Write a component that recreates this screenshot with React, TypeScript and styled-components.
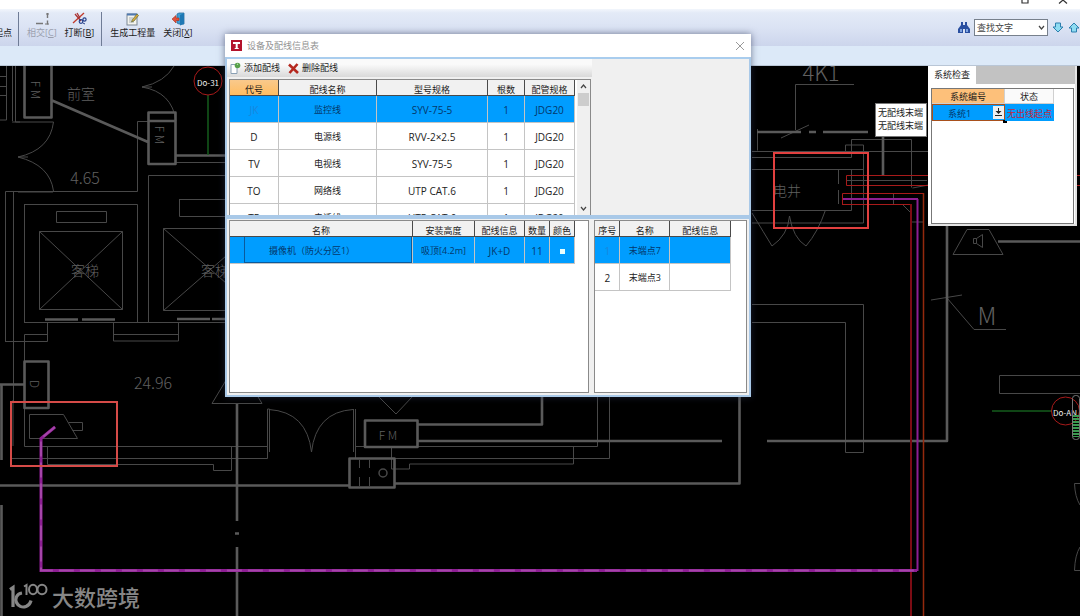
import React from "react";
import styled, { createGlobalStyle } from "styled-components";

const GlobalStyle = createGlobalStyle`
  * { box-sizing: border-box; }
  html, body, #root { height: 100%; }
  body {
    margin: 0;
    background: #000;
    color: #1c1c1c;
    font-family: "Open Sans", "Noto Sans CJK SC", sans-serif;
    font-size: 9px;
    line-height: 12px;
  }
  button, input, select { font: inherit; color: inherit; margin: 0; padding: 0; }
`;

/* ---------- frame ---------- */

const Window = styled.div`
  position: relative;
  display: flex;
  flex-direction: column;
  min-height: 100%;
  overflow: hidden;
`;

const TitleStrip = styled.header`
  display: flex;
  justify-content: flex-end;
  align-items: flex-start;
  gap: 28px;
  height: 9px;
  padding-right: 12px;
  background: #fff;
`;

const Toolbar = styled.nav`
  display: flex;
  align-items: flex-start;
  height: 37px;
  background: linear-gradient(#f2f6fc 0, #e3eaf7 4px, #dbe3f4 50%, #ccd5ec);
`;

const SubBar = styled.div`
  height: 20px;
  background: #dce9f8;
  border-bottom: 1px solid #b9c6d6;
`;

const Tools = styled.div`
  display: flex;
  flex: 1;
`;

const ToolGroup = styled.div<{ $clipped?: boolean }>`
  display: flex;
  justify-content: flex-end;
  gap: 8px;
  height: 34px;
  margin-top: 3px;
  padding: 0 ${(p) => (p.$clipped ? 6 : 7)}px 0 ${(p) => (p.$clipped ? 0 : 8)}px;
  width: ${(p) => (p.$clipped ? "19px" : "auto")};
  overflow: hidden;
  border-right: 1px solid #6f7c96;
  &:last-child { border-right: 0; }
`;

const ToolButton = styled.button`
  display: flex;
  flex-direction: column;
  align-items: center;
  flex: none;
  gap: 1px;
  border: 0;
  background: none;
  white-space: nowrap;
  &:disabled { color: #9a9fae; }
  svg { display: block; height: 14px; }
`;

const Search = styled.form`
  display: flex;
  align-items: center;
  gap: 4px;
  height: 36px;
`;

const Combo = styled.div`
  display: flex;
  align-items: center;
  width: 74px;
  height: 17px;
  padding-right: 2px;
  border: 1px solid #77808c;
  background: #fff;
  input { flex: 1; min-width: 0; height: 15px; border: 0; padding-left: 2px; background: none; outline: 0; color: #444; }
`;

const IconButton = styled.button`
  display: flex;
  align-items: center;
  justify-content: center;
  flex: none;
  border: 0;
  background: none;
`;

const Canvas = styled.main`
  flex: 1;
  display: flex;
  background: #000;
  min-height: 550px;
  svg { flex: 1; width: 100%; }
`;

const CadText = styled.text<{ $light?: boolean }>`
  font-family: "Liberation Sans Narrow", "Noto Sans CJK SC", sans-serif;
  font-weight: ${(p) => (p.$light ? 400 : 300)};
  fill: ${(p) => (p.$light ? "#f0f0f0" : "#606060")};
  text-anchor: middle;
  dominant-baseline: central;
`;

/* ---------- grids ---------- */

const Grid = styled.table`
  border-collapse: separate;
  border-spacing: 0;
  table-layout: fixed;
  flex: none;
  width: 0;
`;

const HeadCell = styled.th<{ $hot?: boolean }>`
  height: 16px;
  padding: 4px 0 0;
  font-weight: 400;
  line-height: 11px;
  text-align: center;
  white-space: nowrap;
  background: ${(p) => (p.$hot ? "linear-gradient(#f9c98c, #ffbd62)" : "#f1f1f1")};
  border-right: 1px solid #4a4a4a;
  border-bottom: 1px solid #4a4a4a;
`;

const Cell = styled.td<{ $faint?: boolean; $latin?: boolean }>`
  height: 27px;
  padding: 2px 0 0;
  font-size: ${(p) => (p.$latin ? 10 : 9)}px;
  text-align: center;
  white-space: nowrap;
  border-right: 1px solid #c4c4c4;
  border-bottom: 1px solid #c4c4c4;
  color: ${(p) => (p.$faint ? "#1a86dd" : "inherit")};
`;

const Row = styled.tr<{ $on?: boolean }>`
  background: ${(p) => (p.$on ? "#009dff" : "#fff")};
  color: ${(p) => (p.$on ? "#04386c" : "#222")};
`;

const TreeCell = styled(Cell)`
  padding: 0 0 0 14px;
`;

const TreeLabel = styled.div`
  height: 26px;
  padding: 8px 32px 0 0;
  border: 1px solid #0a5a9c;
  border-top: 0;
`;

const Swatch = styled.span`
  display: inline-block;
  width: 5px;
  height: 5px;
  background: #e8ffff;
`;

/* ---------- dialog ---------- */

const Dialog = styled.section`
  position: absolute;
  left: 225px;
  top: 34px;
  width: 526px;
  background: #f0f0f0;
  border: 2px solid #a9c9e8;
  border-top: 0;
  box-shadow: 0 0 7px rgba(40, 50, 80, 0.6);
`;

const DialogTitle = styled.header`
  display: flex;
  align-items: center;
  gap: 5px;
  height: 23px;
  margin: 0 -2px;
  padding: 0 6px;
  background: #fff;
  color: #929292;
  h1 { flex: 1; margin: 0; font: inherit; }
`;

const DialogTools = styled.div`
  display: flex;
  align-items: center;
  gap: 8px;
  width: 365px;
  height: 20px;
  padding: 0 3px;
  border-top: 2px solid #a9cdee;
  background: linear-gradient(#fafafa 30%, #d9d9d9);
`;

const ToolLine = styled.div`
  background: linear-gradient(#a9cdee, #a9cdee) 0 0 / 100% 2px no-repeat;
`;

const SmallTool = styled.button`
  display: flex;
  align-items: center;
  gap: 3px;
  border: 0;
  background: none;
`;

const Pane = styled.div`
  display: flex;
  align-items: flex-start;
  background: #fff;
  border: 1px solid #8a8a8a;
  overflow: hidden;
`;

const UpperArea = styled.div`
  padding: 2px 158px 0 2px;
  border-bottom: 4px solid #a9c9e8;
`;

const UpperPane = styled(Pane)`
  height: 136px;
  border-bottom: 0;
  justify-content: space-between;
`;

const LowerArea = styled.div`
  display: grid;
  grid-template-columns: 361fr 153fr;
  gap: 5px;
  padding: 1px 2px 2px;
`;

const LowerPane = styled(Pane)`
  height: 173px;
`;

const ScrollBar = styled.div`
  display: flex;
  flex-direction: column;
  align-items: center;
  align-self: stretch;
  width: 13px;
  background: #f0f0f0;
`;

const ScrollButton = styled(IconButton)`
  width: 12px;
  height: 13px;
`;

const Thumb = styled.div`
  width: 11px;
  height: 13px;
  margin-bottom: auto;
  background: #cdcdcd;
`;

/* ---------- system check panel ---------- */

const CheckPanel = styled.aside`
  position: absolute;
  right: 3px;
  top: 66px;
  width: 149px;
  background: #fff;
  border-right: 2px solid #e4e4e4;
  border-bottom: 2px solid #e4e4e4;
`;

const TabBar = styled.div`
  display: flex;
  height: 18px;
  background: #c2c2c2;
`;

const Tab = styled.button`
  width: 48px;
  border: 0;
  background: #fff;
`;

const CheckBody = styled.div`
  height: 136px;
  margin: 4px 1px 0 3px;
  border: 1px solid #777;
`;

const CheckHead = styled(HeadCell)<{ $hot?: boolean }>`
  height: 15px;
  padding: 0;
  border-color: #d0d0d0;
  background: ${(p) => (p.$hot ? "#fdc07a" : "#fafafa")};
`;

const CheckCell = styled.td`
  position: relative;
  height: 17px;
  padding: 0;
  background: #009dff;
`;

const SystemSelect = styled.select`
  display: block;
  width: 100%;
  height: 17px;
  appearance: none;
  border: 1px solid #a8501c;
  border-radius: 0;
  background: none;
  color: #04386c;
  text-align: center;
  text-align-last: center;
  padding: 2px 18px 0 0;
`;

const DropMark = styled.span`
  position: absolute;
  right: 1px;
  top: 2px;
  display: flex;
  width: 11px;
  height: 13px;
  align-items: center;
  justify-content: center;
  background: #eee;
  pointer-events: none;
`;

const Handle = styled.i`
  position: absolute;
  right: -2px;
  bottom: -2px;
  width: 4px;
  height: 3px;
  background: #000;
`;

const StatusCell = styled(CheckCell)`
  padding-top: 3px;
  color: #c0263c;
  text-align: center;
  white-space: nowrap;
`;

const Hint = styled.div`
  position: absolute;
  right: 153px;
  top: 103px;
  width: 52px;
  padding: 2px 2px 4px;
  border: 1px solid #777;
  background: #fff;
  line-height: 13px;
  white-space: nowrap;
`;

const Watermark = styled.footer`
  position: absolute;
  left: 9px;
  bottom: 4px;
  display: flex;
  align-items: center;
  gap: 4px;
  color: #868686;
  font: 500 22px/32px "Noto Sans CJK SC", sans-serif;
`;

/* ---------- icons ---------- */

const IntersectIcon = () => (
  <svg width="14" height="14" viewBox="0 0 14 14" stroke="#777" fill="none">
    <path d="M1 11.5h7M12.5 1v5M12.5 8.500v4" strokeWidth="1.400" />
    <path d="M11 2h3M10 12h4" />
  </svg>
);

const BreakIcon = () => (
  <svg width="15" height="14" viewBox="0 0 15 14" fill="none">
    <path d="M1 11L12 1" stroke="#c0392b" strokeWidth="1.300" />
    <path d="M3 2l6 7M5 1l3 5" stroke="#a33" strokeWidth="1.300" />
    <circle cx="9" cy="9.500" r="1.800" stroke="#27408b" strokeWidth="1.200" />
    <circle cx="12.500" cy="7.500" r="1.600" stroke="#27408b" strokeWidth="1.200" />
    <path d="M11 11l2 1" stroke="#27408b" />
  </svg>
);

const ReportIcon = () => (
  <svg width="13" height="14" viewBox="0 0 13 14">
    <rect x="1" y="2" width="10" height="11" fill="#f4f4ee" stroke="#7d8794" />
    <path d="M1 2.500h10" stroke="#4f79b0" strokeWidth="2" />
    <path d="M3 6h4M3 8h3M3 10h5" stroke="#a8b0b8" />
    <path d="M5.500 10l1-2.500L11 2l1.500 1.500L8 9z" fill="#d9a93c" stroke="#5d6a3a" strokeWidth=".7" />
  </svg>
);

const ExitIcon = () => (
  <svg width="14" height="14" viewBox="0 0 14 14">
    <path d="M6 2l2-1h5v11H8l-2-1z" fill="#3b9fd6" stroke="#2b6c99" strokeWidth=".8" />
    <path d="M9 3l4-2v11l-4 1.500z" fill="#1f78b4" />
    <path d="M1 7l4-3.500V6h3v2.500H5V11z" fill="#e2513b" stroke="#a8321e" strokeWidth=".6" />
  </svg>
);

const Binoculars = () => (
  <svg width="12" height="11" viewBox="0 0 12 11" fill="#2a4fa0">
    <path d="M3 0h2v3h2V0h2v3l3 4v4H7V7H5v4H0V7l3-4z" />
    <path d="M2 7h2v3H2zM8 7h2v3H8z" fill="#7fa4e0" />
  </svg>
);

const Arrow = ({ up }: { up?: boolean }) => (
  <svg width="12" height="11" viewBox="0 0 12 11">
    <path
      d={up ? "M6 1l5 5H8.500v4h-5V6H1z" : "M6 10L1 5h2.500V1h5v4H11z"}
      fill="#8fdcf2"
      stroke="#2c7fae"
      strokeLinejoin="round"
    />
  </svg>
);

const Chevron = ({ up }: { up?: boolean }) => (
  <svg width="7" height="5" viewBox="0 0 7 5" fill="none" stroke="#444" strokeWidth="1.200">
    <path d={up ? "M1 4l2.500-3L6 4" : "M1 1l2.500 3L6 1"} />
  </svg>
);

const AppLogo = () => (
  <svg width="11" height="11" viewBox="0 0 11 11">
    <rect width="11" height="11" fill="#b3122b" />
    <path d="M2 2h7v2H6.700v4h1v1h-4V8h1V4H2z" fill="#fff" />
  </svg>
);

const AddIcon = () => (
  <svg width="11" height="12" viewBox="0 0 11 12">
    <path d="M1 2.500h6v9H1z" fill="#fff" stroke="#8aa0b4" />
    <circle cx="7.500" cy="3.500" r="2.800" fill="#57a04a" />
    <path d="M7 2l1 .5" stroke="#c8e8bd" strokeWidth="1.200" />
  </svg>
);

const DeleteIcon = () => (
  <svg width="11" height="11" viewBox="0 0 11 11" stroke="#b5281e" strokeWidth="2.600">
    <path d="M1 1.500l9 8.500M9.500 1L1.500 10" />
  </svg>
);

const WatermarkLogo = () => (
  <svg width="39" height="28" viewBox="0 0 39 28" fill="none" stroke="currentColor">
    <path d="M1 7.500l3-2V25" strokeWidth="3.200" />
    <path d="M13 11C7 12 6 17 7.500 20.500S13 26 17 24.500s4-3 5-6" strokeWidth="3.200" />
    <path d="M15 4.500l2.500-1.500V13" strokeWidth="2" />
    <ellipse cx="24" cy="7.500" rx="4" ry="4.800" strokeWidth="2" />
    <ellipse cx="33" cy="7.500" rx="4.500" ry="4.800" strokeWidth="2" />
  </svg>
);

/* ---------- floor plan ---------- */

const THIN = [
  "M6.500 66v54H0M0 76.500h6M0 86.500h6M0 95.500h6M12.500 66v55M15.500 66v56H53.500M12 122h8",
  "M53.500 122Q50 150 18 157Q50 165 53.500 191M18 157h10",
  "M5.500 341V191.500H137.500V121.500H148M13.500 192v210M18 192h35",
  "M24.500 204.500h113v118M24.500 204v118M148.500 322V175.500H225M179.500 199v17.500H225M179 199.500h46",
  "M174 66Q165 82 142 87Q172 92 176 121M142 87h10M176 162.500h50",
  "M56.500 211.500h50v11h-50zM39.500 231.500h83v78h-83zM39.500 231.500l83 78M122.500 231.500l-83 78",
  "M163.500 228.500h94v82h-94zM163.500 228.500l94 82M257.500 228.500l-94 82",
  "M24 322.500h202M5 341.500h42.500v-19M113.500 322v19h65v-19M113.500 334.500h65M47 334.500H24.500V446.500H267.500v12H12",
  "M13 400v46M212 403.500L237 362l25 41.500z",
  "M29.500 414.500h34l14 24h-48zM68.500 422.500h14v8h-10",
  "M47.500 446v18.500H213.500v6h18v-24",
  "M267.500 458v-49h2v43M269 409.500Q307 412 311.500 452Q316 412 353 409.500M353.500 409v43M355.500 409v49",
  "M356 446.500H597.500V397M349 458.500H609.500V397M378 396l18 18 17-18",
  "M391.500 447v22h18v-5h164v-18M359.500 460v8M359.500 477v9M369.500 460v8M369.500 477v9",
  "M752 304.500h111.500V452.500H845.500V322.500H752",
  "M967 229.500h22l14 25h-50zM973.500 238.500v5h3l6 4v-13l-6 4zM976.500 238.500v5M931 300l31-5M947 298l27 31.500h32",
  "M1080 375.500h-80.500v18h80.500M1080 483.500h-5.500Q1075 497 1080 505M1080 570.500h-5.500Q1075 555 1080 547",
  "M795.500 130V84.500H854M781 138l28-13M757.500 129v21.500M752 151.500h176M752 157.500h99.500v-18H911.500v48",
  "M845.500 151v-6h18v78H752M752 169.500h111M838.500 169v15M838.500 190v14M851.500 169v41.500H752",
  "M912.500 188l16-3M847 180.500h80M752 213q12 20 20 33Q788 235 789.500 216Q793 238 806 246Q818 232 825.500 210",
  "M893.500 193v11M903 205l8 8M911 222h12",
];

const THICK = [
  "M24.500 66v51.500h27V66M51 100l97 42M148.500 112.500h27v51.500h-27zM148 121h27M176 155.500h50",
  "M24.500 361.500h24V408h-24zM0 384.500h24M1.500 384v76M1.500 505v111",
  "M45 319.500h33M82 319.500h33M177 319h33M212 319h14",
  "M237 404v117M235 533.500h4M237 547v69M0 485.500h350M349.500 458.500h45v29h-45z",
  "M365 420.500h52.500V447H365zM417 424.500H542V397M417 441H722M394 483.500H739.500V397",
  "M767 441H947V226M1080 241.500h-82M757 132h44M809 132h7M823 132h45M883 136v39",
];

const Plan = () => (
  <svg aria-label="平面图" height="550" fill="none">
    <g transform="translate(0 -66)">
      <g stroke="#484848">
        {THIN.map((d) => <path key={d} d={d} />)}
        <circle cx="383" cy="473" r="4" strokeWidth="1.500" />
      </g>
      <g stroke="#5a5a5a" strokeWidth="2.600" strokeLinejoin="round">
        {THICK.map((d) => <path key={d} d={d} />)}
      </g>

      <CadText x="81" y="93" fontSize="14">前室</CadText>
      <CadText x="85" y="177" fontSize="16">4.65</CadText>
      <CadText x="153" y="382" fontSize="16">24.96</CadText>
      <CadText x="85" y="270" fontSize="14">客梯</CadText>
      <CadText x="215" y="270" fontSize="14">客梯</CadText>
      <CadText x="388" y="434" fontSize="12">F M</CadText>
      <CadText fontSize="12" transform="translate(36 90) rotate(90)">F M</CadText>
      <CadText fontSize="12" transform="translate(160 135) rotate(90)">F M</CadText>
      <CadText fontSize="12" transform="translate(35 384) rotate(90)">D</CadText>
      <CadText x="821" y="71" fontSize="22">4K1</CadText>
      <CadText x="787" y="190" fontSize="14">电井</CadText>
      <CadText x="987" y="314" fontSize="24">M</CadText>

      <path d="M208 95v60M992 411h60" stroke="#145c1c" strokeWidth="1.500" />
      <g stroke="#a81a1a">
        <circle cx="208" cy="81" r="14" />
        <circle cx="1065.500" cy="411" r="14" />
        <path d="M928 175.500h-81.500v10H928M1077 175.500h3M1077 185.500h3" />
        <path d="M842.500 204.500v-11H923M842 204.500h69" />
      </g>
      <path d="M911 204v412" stroke="#7c0c14" strokeWidth="2" />
      <path d="M923.500 193v423" stroke="#94290d" strokeWidth="1.500" />
      <CadText $light x="208" y="82" fontSize="8">Do-31</CadText>
      <CadText $light x="1065" y="412" fontSize="8">Do-AN</CadText>
      <rect x="1072.500" y="395.500" width="7" height="44" rx="3" stroke="#777" />
      <path d="M1076 415v22" stroke="#3b9a50" strokeWidth="6" strokeDasharray="2 1" />

      <g stroke="#8d1f93">
        <path d="M843 199h75" strokeWidth="2" />
        <path d="M917.500 199v372" strokeWidth="2" />
        <path d="M55 427L41 438.500V570.500H917" strokeWidth="3" />
      </g>
      <path d="M55 427L41 438.500V570.500H917" stroke="#a545a9" strokeWidth="2" strokeDasharray="15 6" />

      <rect x="11" y="402" width="106" height="64" stroke="#d64b48" strokeWidth="2" />
      <rect x="774" y="153" width="94" height="75" stroke="#e2403f" strokeWidth="2" />
    </g>
  </svg>
);

/* ---------- data ---------- */

const wires = [
  ["JK", "监控线", "SYV-75-5", "1", "JDG20"],
  ["D", "电源线", "RVV-2×2.5", "1", "JDG20"],
  ["TV", "电视线", "SYV-75-5", "1", "JDG20"],
  ["TO", "网络线", "UTP CAT.6", "1", "JDG20"],
  ["TP", "电话线", "UTP CAT.6", "1", "JDG20"],
];

const Columns = ({ widths }: { widths: number[] }) => (
  <colgroup>
    {widths.map((w, i) => <col key={i} width={w} />)}
  </colgroup>
);

const Heads = ({ names, hot }: { names: string[]; hot?: boolean }) => (
  <thead>
    <tr>
      {names.map((n, i) => <HeadCell key={n} $hot={hot && i === 0}>{n}</HeadCell>)}
    </tr>
  </thead>
);

export default function App() {
  return (
    <Window>
      <GlobalStyle />
      <TitleStrip>
        <svg width="9" height="5" fill="none" stroke="#333" strokeWidth="1.200" aria-hidden="true">
          <path d="M1 0v3h6V0" />
        </svg>
        <svg width="10" height="5" fill="none" stroke="#333" strokeWidth="1.200" aria-hidden="true">
          <path d="M1 3.500L5 0l4 3.500" />
        </svg>
      </TitleStrip>

      <Toolbar>
        <Tools>
          <ToolGroup $clipped>
            <ToolButton><svg width="14" height="14" />起点</ToolButton>
          </ToolGroup>
          <ToolGroup>
            <ToolButton disabled><IntersectIcon /><span>相交[<u>C</u>]</span></ToolButton>
            <ToolButton><BreakIcon /><span>打断[<u>B</u>]</span></ToolButton>
          </ToolGroup>
          <ToolGroup>
            <ToolButton><ReportIcon />生成工程量</ToolButton>
            <ToolButton><ExitIcon /><span>关闭[<u>X</u>]</span></ToolButton>
          </ToolGroup>
        </Tools>
        <Search onSubmit={(e) => e.preventDefault()}>
          <Binoculars />
          <Combo>
            <input aria-label="查找文字" defaultValue="查找文字" />
            <IconButton type="button" aria-label="展开"><Chevron /></IconButton>
          </Combo>
          <IconButton aria-label="下一个"><Arrow /></IconButton>
          <IconButton type="button" aria-label="上一个"><Arrow up /></IconButton>
        </Search>
      </Toolbar>
      <SubBar />

      <Canvas><Plan /></Canvas>

      <Dialog role="dialog" aria-labelledby="dialog-title">
        <DialogTitle>
          <AppLogo />
          <h1 id="dialog-title">设备及配线信息表</h1>
          <IconButton aria-label="关闭">
            <svg width="10" height="10" stroke="#999" fill="none"><path d="M1 1l8 8M9 1L1 9" /></svg>
          </IconButton>
        </DialogTitle>
        <ToolLine>
          <DialogTools>
            <SmallTool><AddIcon />添加配线</SmallTool>
            <SmallTool><DeleteIcon />删除配线</SmallTool>
          </DialogTools>
        </ToolLine>

        <UpperArea>
          <UpperPane>
            <Grid>
              <Columns widths={[49, 98, 111, 37, 50]} />
              <Heads names={["代号", "配线名称", "型号规格", "根数", "配管规格"]} hot />
              <tbody>
                {wires.map((w, r) => (
                  <Row key={w[0]} $on={r === 0}>
                    {w.map((v, c) => (
                      <Cell key={c} $faint={r === 0 && c === 0} $latin={c !== 1}>{v}</Cell>
                    ))}
                  </Row>
                ))}
              </tbody>
            </Grid>
            <ScrollBar>
              <ScrollButton aria-label="向上滚动"><Chevron up /></ScrollButton>
              <Thumb />
              <ScrollButton aria-label="向下滚动"><Chevron /></ScrollButton>
            </ScrollBar>
          </UpperPane>
        </UpperArea>

        <LowerArea>
          <LowerPane>
            <Grid>
              <Columns widths={[183, 62, 50, 25, 25]} />
              <Heads names={["名称", "安装高度", "配线信息", "数量", "颜色"]} />
              <tbody>
                <Row $on>
                  <TreeCell><TreeLabel>摄像机（防火分区1）</TreeLabel></TreeCell>
                  <Cell>吸顶[4.2m]</Cell>
                  <Cell $latin>JK+D</Cell>
                  <Cell $latin>11</Cell>
                  <Cell><Swatch /></Cell>
                </Row>
              </tbody>
            </Grid>
          </LowerPane>
          <LowerPane>
            <Grid>
              <Columns widths={[25, 50, 61]} />
              <Heads names={["序号", "名称", "配线信息"]} />
              <tbody>
                <Row $on><Cell $faint $latin>1</Cell><Cell>末端点7</Cell><Cell /></Row>
                <Row><Cell $latin>2</Cell><Cell>末端点3</Cell><Cell /></Row>
              </tbody>
            </Grid>
          </LowerPane>
        </LowerArea>
      </Dialog>

      <Hint>无配线末端<br />无配线末端</Hint>

      <CheckPanel>
        <TabBar role="tablist">
          <Tab role="tab" aria-selected="true">系统检查</Tab>
        </TabBar>
        <CheckBody>
          <Grid>
            <Columns widths={[73, 49]} />
            <thead>
              <tr><CheckHead $hot>系统编号</CheckHead><CheckHead>状态</CheckHead></tr>
            </thead>
            <tbody>
              <tr>
                <CheckCell>
                  <SystemSelect aria-label="系统编号"><option>系统1</option></SystemSelect>
                  <DropMark>
                    <svg width="7" height="9" fill="#222"><path d="M3 0h1v3h2.500L3.500 6 .5 3H3zM0 7h7v1H0z" /></svg>
                  </DropMark>
                  <Handle />
                </CheckCell>
                <StatusCell>无出线起点</StatusCell>
              </tr>
            </tbody>
          </Grid>
        </CheckBody>
      </CheckPanel>

      <Watermark><WatermarkLogo />大数跨境</Watermark>
    </Window>
  );
}
